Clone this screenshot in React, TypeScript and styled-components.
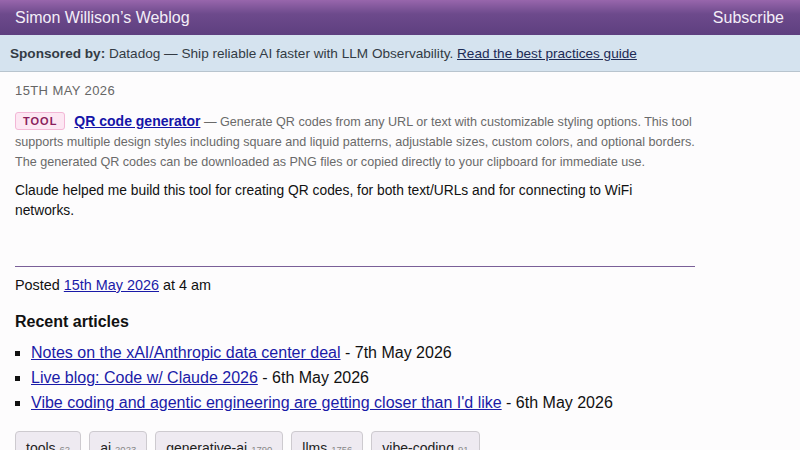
import styled, { createGlobalStyle } from 'styled-components';

const GlobalStyle = createGlobalStyle`
  html, body {
    margin: 0;
    padding: 0;
    background: #fdfcfd;
    font-family: 'Liberation Sans', Arial, Helvetica, sans-serif;
    color: #111;
  }
`;

const Header = styled.header`
  height: 35px;
  display: flex;
  align-items: center;
  justify-content: space-between;
  padding: 0 16px 0 15px;
  background: linear-gradient(to bottom, #9866ac 0%, #6d4a8c 40%, #5e3f7f 100%);
  color: #f4eef8;
  font-size: 16px;
`;

const HeaderLink = styled.a`
  color: inherit;
  text-decoration: none;
`;

const SponsorBar = styled.div`
  height: 36px;
  display: flex;
  align-items: center;
  padding: 0 10px;
  background: #d5e3ef;
  border-bottom: 1px solid #b8c4ce;
  font-size: 13.6px;
  color: #333b44;
  white-space: pre;

  a {
    color: #1c2a55;
  }
`;

const Main = styled.main`
  max-width: 680px;
  padding: 0 15px;
`;

const DateLine = styled.div`
  margin-top: 11px;
  font-size: 13px;
  letter-spacing: 0.4px;
  color: #666;
  text-transform: uppercase;
`;

const Blurb = styled.p`
  margin: 13px 0 0;
  font-size: 12.6px;
  line-height: 20px;
  color: #6a6a6a;
`;

const Badge = styled.span`
  display: inline-block;
  margin-right: 9px;
  padding: 1px 7px;
  line-height: 14px;
  font-size: 11px;
  font-weight: bold;
  letter-spacing: 1px;
  color: #8a1d5c;
  background: #fde7f3;
  border: 1px solid #f3b7d6;
  border-radius: 3px;
  vertical-align: 1px;
`;

const Title = styled.a`
  font-size: 14px;
  font-weight: bold;
  color: #1414a8;
`;

const Body = styled.p`
  margin: 9px 0 0;
  font-size: 13.8px;
  line-height: 20px;
`;

const Rule = styled.hr`
  margin: 45px 0 0;
  border: 0;
  border-top: 1.5px solid #7a5f98;
`;

const Posted = styled.p`
  margin: 10px 0 0;
  font-size: 14.4px;

  a {
    color: #1a1aa8;
  }
`;

const SectionTitle = styled.h3`
  margin: 20px 0 0;
  font-size: 16px;
  font-weight: bold;
`;

const Articles = styled.ul`
  margin: 9px 0 0;
  padding-left: 16px;
  list-style: square;
  font-size: 16px;
  line-height: 25px;

  a {
    color: #1a1aa8;
  }
`;

const Tags = styled.div`
  display: flex;
  gap: 8px;
  margin-top: 16px;
  white-space: nowrap;
`;

const Tag = styled.a`
  padding: 8px 10px 6px;
  font-size: 14px;
  color: #222;
  text-decoration: none;
  background: #eeeaf1;
  border: 1px solid #cdcacf;
  border-radius: 4px;
`;

const Count = styled.span`
  margin-left: 4px;
  font-size: 9.5px;
  color: #888;
`;

const recent = [
  { title: 'Notes on the xAI/Anthropic data center deal', date: '7th May 2026' },
  { title: 'Live blog: Code w/ Claude 2026', date: '6th May 2026' },
  { title: "Vibe coding and agentic engineering are getting closer than I'd like", date: '6th May 2026' },
];

const tags = [
  { name: 'tools', count: 62 },
  { name: 'ai', count: 2023 },
  { name: 'generative-ai', count: 1790 },
  { name: 'llms', count: 1756 },
  { name: 'vibe-coding', count: 91 },
];

export default function App() {
  return (
    <>
      <GlobalStyle />
      <Header>
        <HeaderLink href="#">Simon Willison’s Weblog</HeaderLink>
        <HeaderLink href="#">Subscribe</HeaderLink>
      </Header>
      <SponsorBar>
        <strong>Sponsored by:</strong> Datadog — Ship reliable AI faster with LLM Observability.{' '}
        <a href="#">Read the best practices guide</a>
      </SponsorBar>
      <Main>
        <DateLine>15th May 2026</DateLine>
        <Blurb>
          <Badge>TOOL</Badge>
          <Title href="#">QR code generator</Title> — Generate QR codes from any URL or text with
          customizable styling options. This tool supports multiple design styles including square
          and liquid patterns, adjustable sizes, custom colors, and optional borders. The generated QR
          codes can be downloaded as PNG files or copied directly to your clipboard for immediate use.
        </Blurb>
        <Body>
          Claude helped me build this tool for creating QR codes, for both text/URLs and for
          connecting to WiFi networks.
        </Body>
        <Rule />
        <Posted>
          Posted <a href="#">15th May 2026</a> at 4 am
        </Posted>
        <SectionTitle>Recent articles</SectionTitle>
        <Articles>
          {recent.map((item) => (
            <li key={item.title}>
              <a href="#">{item.title}</a> - {item.date}
            </li>
          ))}
        </Articles>
        <Tags>
          {tags.map((tag) => (
            <Tag href="#" key={tag.name}>
              {tag.name}
              <Count>{tag.count}</Count>
            </Tag>
          ))}
        </Tags>
      </Main>
    </>
  );
}
